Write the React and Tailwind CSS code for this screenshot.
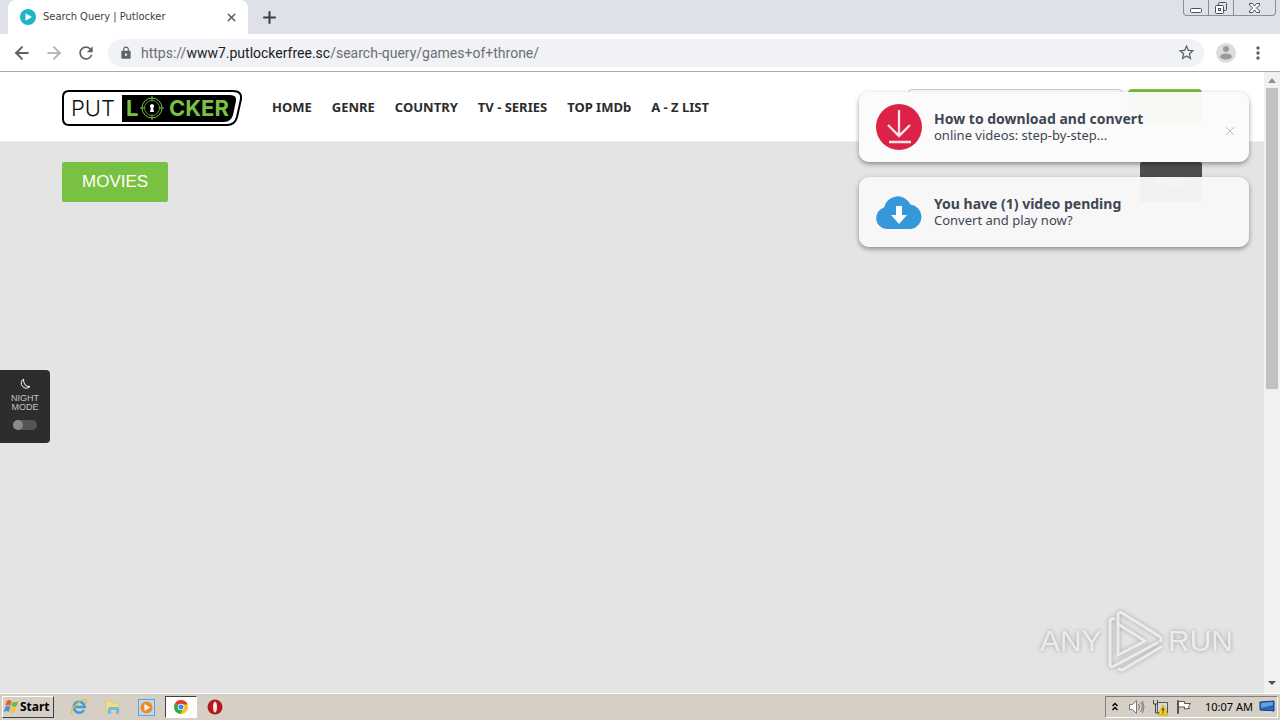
import { useState } from 'react';
import { ArrowLeft, ArrowRight, Plus, X } from 'lucide-react';
import { MdLock, MdMoreVert, MdRefresh, MdStarBorder } from 'react-icons/md';

const NAV = ['HOME', 'GENRE', 'COUNTRY', 'TV - SERIES', 'TOP IMDb', 'A - Z LIST'];

function TabStrip() {
  return (
    <div className="flex h-[34px] shrink-0 items-end bg-[#dee1e8]">
      <div className="ml-2 flex h-[34px] w-60 items-center rounded-t-lg bg-white pr-2.5 pl-3">
        <svg className="size-4 shrink-0" viewBox="0 0 16 16">
          <circle cx="8" cy="8" r="8" fill="#1fb5c5" />
          <path d="M5.5 4.2v7.6L12 8z" fill="#fff" />
        </svg>
        <span className="ml-[7px] flex-1 truncate font-['DejaVu_Sans_Condensed','Roboto',sans-serif] text-[11px] text-[#3c4043]">Search Query | Putlocker</span>
        <button aria-label="Close tab" className="text-[#5f6368]"><X size={13} strokeWidth={3} /></button>
      </div>
      <button aria-label="New tab" className="ml-3 self-center text-[#3c4043]"><Plus size={19} strokeWidth={2.6} /></button>
      <div className="mr-1 ml-auto flex h-4 divide-x divide-[#8a8e99] self-start rounded-b border border-t-0 border-[#8a8e99] text-[#4b4f5a]">
        <button aria-label="Minimize" className="flex w-[25px] items-center justify-center">
          <svg width="12" height="16" fill="#fff" stroke="currentColor"><rect x=".5" y="8.5" width="11" height="4" rx="1" /></svg>
        </button>
        <button aria-label="Restore" className="flex w-[25px] items-center justify-center">
          <svg width="14" height="16" fill="none" stroke="currentColor">
            <rect x="4.500" y="2.500" width="8" height="8" rx="1" />
            <rect x="1.500" y="5.500" width="8" height="8" rx="1" fill="#fff" />
            <rect x="4.500" y="8.500" width="2" height="2" />
          </svg>
        </button>
        <button aria-label="Close" className="flex w-[41px] items-center justify-center">
          <svg width="13" height="16" fill="#fff" stroke="currentColor">
            <path d="M1.500 3.500h3l2 2.500 2-2.500h3v1.500l-3 3 3 3v1.500h-3l-2-2.500-2 2.500h-3v-1.500l3-3-3-3z" />
          </svg>
        </button>
      </div>
    </div>
  );
}

function Toolbar() {
  const [url, setUrl] = useState('https://www7.putlockerfree.sc/search-query/games+of+throne/');
  const [, scheme, host, path] = url.match(/^(\w+:\/\/)?([^/]*)(.*)$/);

  return (
    <div className="flex h-[38px] shrink-0 items-center border-b border-[#a9aaac] bg-white px-3 text-[#5f6368]">
      <button aria-label="Back"><ArrowLeft size={20} strokeWidth={2.4} /></button>
      <button aria-label="Forward" className="ml-3 text-[#b5b7ba]"><ArrowRight size={20} strokeWidth={2.4} /></button>
      <button aria-label="Reload" className="ml-3"><MdRefresh size={20} /></button>
      <div className="ml-3 flex h-7 flex-1 items-center rounded-full bg-[#f0f2f5] pr-2 pl-[11px]">
        <MdLock size={14} className="shrink-0" />
        <div className="relative ml-2 flex-1 text-[14px] leading-5 font-['Roboto',sans-serif]">
          <div aria-hidden="true" className="pointer-events-none whitespace-pre text-[#6b6f74]">
            {scheme}<span className="text-[#202124]">{host}</span>{path}
          </div>
          <input
            aria-label="Address"
            value={url}
            onChange={e => setUrl(e.target.value)}
            className="absolute inset-0 w-full bg-transparent text-transparent caret-black outline-none"
          />
        </div>
        <button aria-label="Bookmark this page"><MdStarBorder size={19} /></button>
      </div>
      <button aria-label="Profile" className="ml-3">
        <svg width="20" height="20" viewBox="0 0 20 20">
          <circle cx="10" cy="10" r="10" fill="#dcdcdd" />
          <circle cx="10" cy="6" r="3" fill="#9a9a9b" />
          <ellipse cx="10" cy="13.500" rx="6" ry="3" fill="#9a9a9b" />
        </svg>
      </button>
      <button aria-label="Menu" className="ml-3"><MdMoreVert size={20} /></button>
    </div>
  );
}

function Logo() {
  return (
    <svg width="180" height="36" viewBox="0 0 180 36" role="img" aria-label="Putlocker">
      <path d="M7 1h164q9 0 8 8l-4 18q-2 8-10 8H7q-6 0-6-6V7q0-6 6-6z" fill="#fff" stroke="#000" strokeWidth="2" />
      <path d="M60 5h108q7 0 6 6l-3 14q-2 7-9 7H60z" fill="#000" />
      <text x="9" y="26" fontFamily="Inter, sans-serif" fontSize="22" fontWeight="300" fill="#111">PUT</text>
      <g fontFamily="Inter, sans-serif" fontSize="22" fontWeight="700" fill="#78c143">
        <text x="64" y="26">L</text>
        <text x="107" y="26">CKER</text>
      </g>
      <g fill="none" stroke="#78c143">
        <circle cx="90" cy="18" r="10" />
        <circle cx="90" cy="18" r="7.500" strokeWidth=".7" />
        <path d="M90 6v5M90 25v5M78 18h5M97 18h5" />
      </g>
      <path d="M90 14a2.200 2.200 0 0 1 1.200 4l.8 4h-4l.8-4a2.200 2.200 0 0 1 1.200-4z" fill="#fff" />
    </svg>
  );
}

function SiteHeader() {
  return (
    <header className="h-[70px] border-b border-[#f2f2f2] bg-white">
      <div className="mx-auto flex w-full max-w-[1140px] items-start pt-[17px]">
        <a href="#home" className="mt-px"><Logo /></a>
        <nav className="ml-[30px] flex gap-5 pt-2 font-['Noto_Sans',sans-serif] text-[13px] leading-5 font-bold text-[#2b2b2b]">
          {NAV.map(item => <a key={item} href="#nav">{item}</a>)}
        </nav>
        <form className="ml-auto flex gap-[5px]" onSubmit={e => e.preventDefault()}>
          <input aria-label="Search" className="h-[35px] w-[215px] rounded-sm border border-[#c9c9c9] bg-white px-2" />
          <button className="h-[35px] w-[74px] rounded-sm bg-[#79c142]" aria-label="Search" />
        </form>
      </div>
    </header>
  );
}

function Notice({ icon, title, text, closable, className }) {
  return (
    <div className={`flex h-[70px] items-center rounded-[10px] pr-3 pl-4 shadow-[0_2px_5px_rgba(0,0,0,0.4)] ${className}`}>
      {icon}
      <div className="ml-[11px] flex-1 font-['Noto_Sans',sans-serif] text-[13px] leading-4 text-[#3f4652]">
        <p className="text-[14px] font-bold">{title}</p>
        <p>{text}</p>
      </div>
      {closable && <button aria-label="Dismiss" className="mt-2 text-[#b5b5b5]"><X size={14} strokeWidth={1.5} /></button>}
    </div>
  );
}

const downloadIcon = (
  <svg width="48" height="48" viewBox="0 0 48 48" fill="none" stroke="#fbe4e8" strokeWidth="2.300">
    <circle cx="24" cy="24" r="23" fill="#dc2347" stroke="none" />
    <path d="M24 7v25M13 22l11 11 11-11M14 39h22" />
  </svg>
);

const cloudIcon = (
  <svg width="48" height="34" viewBox="0 0 48 34">
    <path d="M11 34a11 11 0 0 1-2-21.500A14 14 0 0 1 35.500 9.600 12.300 12.300 0 0 1 36 34z" fill="#3498db" />
    <path d="M21 11h6v9h5l-8 9-8-9h5z" fill="#fff" />
  </svg>
);

function NightMode() {
  const [on, setOn] = useState(false);
  return (
    <label className="absolute top-[298px] left-0 flex h-[73px] w-[50px] flex-col items-center rounded-r bg-[#2d2d2d] pt-2 text-center font-['Liberation_Sans',sans-serif] text-[9px] leading-[9px] text-[#c4c4c4]">
      <svg className="mb-1" width="12" height="12" viewBox="0 0 12 12" fill="none" stroke="#fff">
        <path d="M4.500 1A5 5 0 1 0 11 8.500Q4.500 9 4.500 1z" />
      </svg>
      <span className="w-8">NIGHT MODE</span>
      <input type="checkbox" checked={on} onChange={() => setOn(!on)} className="sr-only" />
      <span className={`mt-2 flex h-2.5 w-6 rounded-full bg-[#555] ${on ? 'justify-end' : ''}`}>
        <span className="size-2.5 rounded-full bg-[#8b8b8b]" />
      </span>
    </label>
  );
}

function Watermark() {
  return (
    <svg className="absolute right-7 bottom-5 drop-shadow-[0_0_2px_rgba(0,0,0,0.3)]" width="200" height="64" viewBox="0 0 200 64" role="img" aria-label="ANY RUN">
      <g fontFamily="'Liberation Sans Narrow', 'Liberation Sans', sans-serif" fontSize="30" fill="#ececec">
        <text x="4" y="42">ANY</text>
        <text x="132" y="42">RUN</text>
      </g>
      <g fill="none" stroke="#ececec" strokeWidth="3" strokeLinecap="round" strokeLinejoin="round">
        <path d="M78 10q-4-1-4 3v42q0 4 4 2l43-23" />
        <path d="M82 46V6q0-4 4-2l37 23q4 3 1 5" />
        <path d="M82 46l27-14-27-17" />
        <path d="M83 60q3 2 5 0l37-22" />
      </g>
    </svg>
  );
}

function Scrollbar() {
  return (
    <div className="flex w-4 shrink-0 flex-col items-center bg-[#f1f1f1]">
      <svg width="16" height="16"><path d="M4 11l4-5 4 5z" fill="#8f8f8f" /></svg>
      <div className="h-[301px] w-3 bg-[#c1c1c1]" />
      <svg width="16" height="16" className="mt-auto mb-0.5"><path d="M4 6h8l-4 4z" fill="#505050" /></svg>
    </div>
  );
}

function Page() {
  return (
    <div className="flex min-h-0 flex-1">
      <main className="relative min-w-0 flex-1 overflow-hidden bg-[#e4e4e4]">
        <SiteHeader />
        <div className="mx-auto mt-5 flex w-full max-w-[1140px] items-start justify-between font-['Liberation_Sans',sans-serif]">
          <h1 className="rounded-xs bg-[#79c142] px-5 text-[17px] leading-10 text-white">MOVIES</h1>
          <button className="h-10 w-[62px] rounded-xs bg-[#4d4d4d] text-[13px] text-white">Filter</button>
        </div>
        <NightMode />
        <div className="absolute top-5 right-[15px] flex w-[390px] flex-col gap-[15px]">
          <Notice icon={downloadIcon} title="How to download and convert" text="online videos: step-by-step..." closable className="bg-[#fbfbfb]/97" />
          <Notice icon={cloudIcon} title="You have (1) video pending" text="Convert and play now?" className="bg-[#f8f8f8]/96" />
        </div>
        <Watermark />
      </main>
      <Scrollbar />
    </div>
  );
}

function Taskbar() {
  return (
    <footer className="flex h-[27px] shrink-0 items-center border-t border-white bg-[#d6cfc6] pl-0.5 text-black">
      <button className="flex h-[22px] w-[52px] items-center border border-t-white border-r-[#404040] border-b-[#404040] border-l-white text-[12px] font-bold">
        <svg width="17" height="16" viewBox="0 0 16 16">
          <path d="M3 2q3-2 5 0L7 7Q5 5 2 7z" fill="#e8602c" />
          <path d="M9 3q3 1 6-1l-2 5q-2 2-5 0z" fill="#76b82a" />
          <path d="M2 8q3-2 5 0l-2 5Q3 11 0 13z" fill="#4a8fd8" />
          <path d="M8 9q3 1 5-1l-2 5q-2 2-5 0z" fill="#f8c42b" />
        </svg>
        Start
      </button>
      <button aria-label="Internet Explorer" className="ml-4">
        <svg width="18" height="18" viewBox="0 0 18 18" fill="none">
          <path d="M14 12a5.500 5.500 0 1 1 .7-3H4" stroke="#3b9ddd" strokeWidth="2.500" />
          <path d="M2 16C-1 12 11 0 16 2q2 1-1 5" stroke="#e9b93b" strokeWidth="1.300" />
        </svg>
      </button>
      <button aria-label="Explorer" className="ml-4">
        <svg width="18" height="18" viewBox="0 0 18 18">
          <path d="M2 3h5l1 2h7v9H2z" fill="#f3dc83" stroke="#d9b95a" strokeWidth=".5" />
          <path d="M4 16v-5q0-2 2-2h7q2 0 2 2v5h-3v-4H7v4z" fill="#6bbce6" />
        </svg>
      </button>
      <button aria-label="Media Player" className="ml-4">
        <svg width="17" height="17" viewBox="0 0 17 17">
          <rect x=".5" y=".5" width="16" height="16" fill="#b9dcf4" stroke="#5fa3d4" />
          <circle cx="8.500" cy="8.500" r="6" fill="#f28a1d" />
          <path d="M6.500 5v7l5.500-3.500z" fill="#fff" />
        </svg>
      </button>
      <button aria-label="Chrome" className="ml-2.5 flex h-[22px] w-8 items-center justify-center border border-t-[#404040] border-r-white border-b-white border-l-[#404040] bg-white">
        <svg width="14" height="14" viewBox="0 0 14 14">
          <circle cx="7" cy="7" r="7" fill="#fbc116" />
          <path d="M7 7L1 3.500a7 7 0 0 1 12.500 1H7z" fill="#e33b2e" />
          <path d="M7 7L1 3.500a7 7 0 0 0 5.500 10.500L9.500 8z" fill="#2da94f" />
          <circle cx="7" cy="7" r="3.200" fill="#fff" />
          <circle cx="7" cy="7" r="2.500" fill="#4285f4" />
        </svg>
      </button>
      <button aria-label="Opera" className="ml-2.5">
        <svg width="16" height="16" viewBox="0 0 16 16">
          <circle cx="8" cy="8" r="7.500" fill="#b5181c" />
          <ellipse cx="8" cy="8" rx="2" ry="5.500" fill="#f4e9e6" />
        </svg>
      </button>

      <div className="mr-0.5 ml-auto flex h-[22px] items-center border border-t-[#808080] border-r-white border-b-white border-l-[#808080] pl-1.5 text-[11px]">
        <button aria-label="Show hidden icons">
          <svg width="6" height="10" fill="none" stroke="#000" strokeWidth="1.400"><path d="M.5 4L3 1.500 5.500 4M.5 8L3 5.500 5.500 8" /></svg>
        </button>
        <svg className="ml-2.5" width="18" height="16" fill="#fff" stroke="#777">
          <path d="M1.500 5.500h3l4-4v13l-4-4h-3z" />
          <path d="M10.500 5q2 3 0 6M12.500 3q3.500 5 0 10M14.500 2q3 6 0 12" fill="none" />
        </svg>
        <svg className="ml-1.5" width="18" height="17">
          <path d="M5.500 3.500h10v10h-10z" fill="#d8d8d8" stroke="#555" />
          <path d="M1.500 1v4h4V1M3.500 5v9h4" fill="none" stroke="#444" />
          <path d="M11 6l5 10H6z" fill="#f5d414" stroke="#b39400" strokeWidth=".6" />
          <path d="M11 9v3.500M11 13.500v1" stroke="#000" />
        </svg>
        <svg className="ml-1.5" width="17" height="16" fill="#fff" stroke="#555">
          <path d="M1.500 1.500h1v13h-1z" />
          <path d="M2.500 2.500h6v2h6l-2 3 1 2-5 .5v-2h-6z" />
        </svg>
        <span className="ml-3">10:07 AM</span>
        <svg className="mr-px ml-1.5" width="17" height="14">
          <path d="M1 2l14-1v10L1 10z" fill="#2766bd" stroke="#153f7d" />
          <path d="M2 3l12-1v3L2 8z" fill="#64a0e0" />
          <path d="M5 12h8" stroke="#ddd" />
        </svg>
      </div>
    </footer>
  );
}

export default function App() {
  return (
    <div className="flex h-screen flex-col overflow-hidden font-['Noto_Sans',sans-serif]">
      <TabStrip />
      <Toolbar />
      <Page />
      <Taskbar />
    </div>
  );
}
